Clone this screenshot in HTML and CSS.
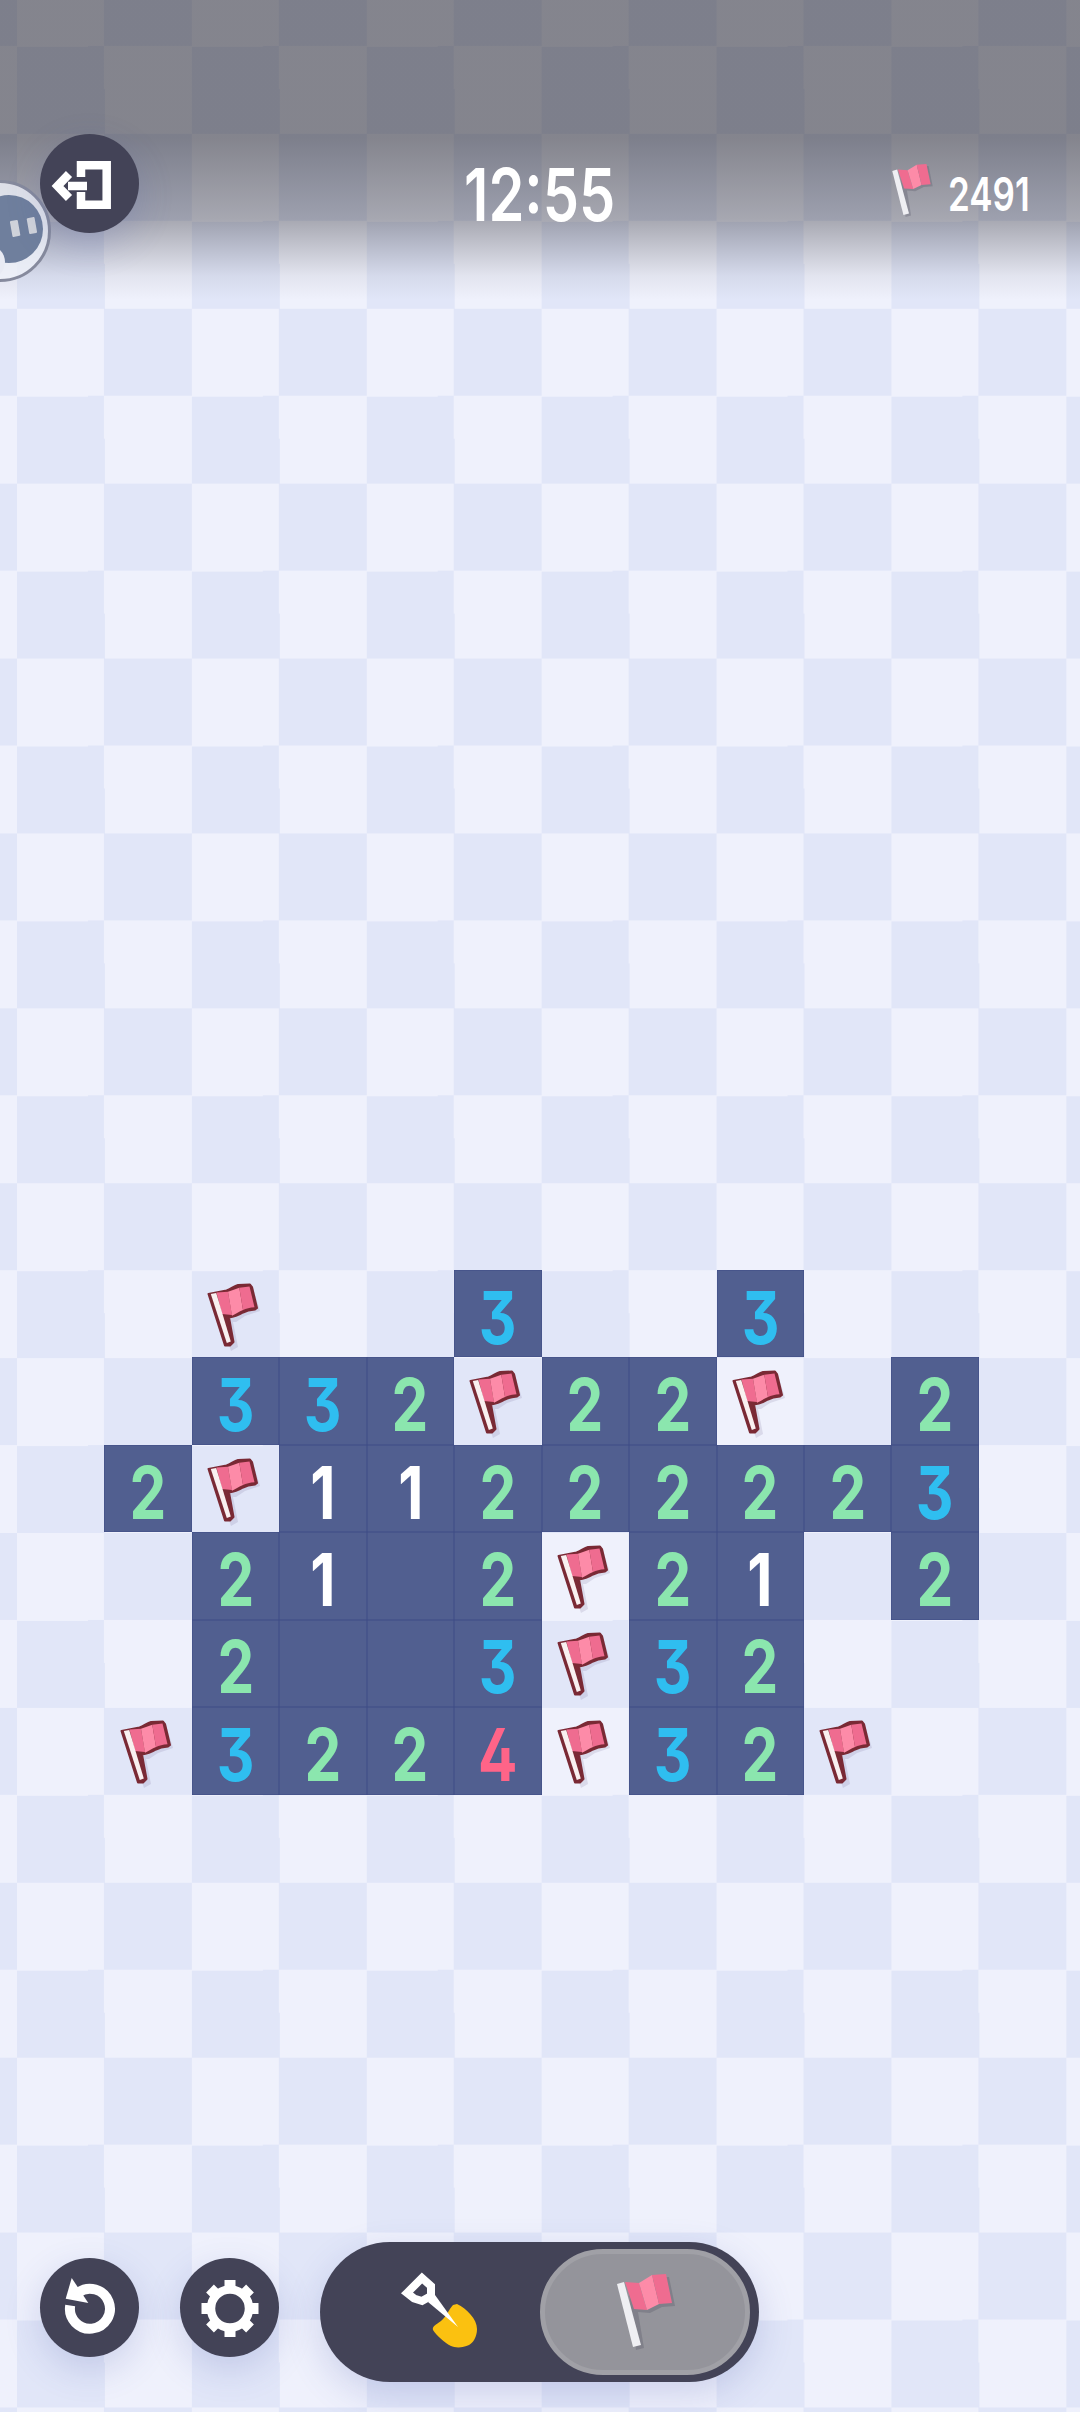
FILE: index.html
```html
<!DOCTYPE html>
<html lang="en">
<head>
  <meta charset="UTF-8">
  <title>Minesweeper</title>
  <link rel="stylesheet" href="styles.css">
</head>
<body>
  <svg class="defs" width="0" height="0">
    <defs>
      <symbol id="flag" viewBox="0 0 56 70">
        <path class="flag-shadow" d="M6 14 L22 10 L33 5 L46 5 L53 28 L38 33 L29 39 L26 39 L31 64 L24 68 Z"/>
        <path class="flag-line" d="M1.500 11 L19.500 7.500 C24 6 27 3 31 2 L43 1.500 L45 4 L50 25 L48 26.500 C43 27 39 28 36 29.500 C32 32 28 34 22 34.500 L26.500 59 L23 62.500 L18 62.500 Z"/>
        <path class="flag-pink" d="M9.500 9.500 L21 8.700 L25 32 L15 31 Z"/>
        <path class="flag-light" d="M21 8.700 C25 7.500 28.500 6 32.300 4.700 L36 27 C32 28.500 29 31 25 32.700 Z"/>
        <path class="flag-pink" d="M32.300 4.700 L42.500 3.500 L47.500 24.300 C43 24.500 39 25.700 36 27 Z"/>
        <path class="flag-pole" d="M3.800 11 L9.200 10 L23.800 58.500 L19.800 60 Z"/>
      </symbol>
      <symbol id="flag-plain" viewBox="0 0 58 76">
        <path class="flag-plain-shadow" d="M11 11 L25 12 L38 4 L52 3 L58 32 L45 33 L33 39 L21 38 L27 74 L19 76 Z"/>
        <path class="flag-pink" d="M8 8 L22 9 L30 36 L17 35 Z"/>
        <path class="flag-light" d="M22 9 L35 1 L42 30 L30 36 Z"/>
        <path class="flag-pink" d="M35 1 L49 0 L55 29 L42 30 Z"/>
        <path class="flag-pole-plain" d="M0 10 L7 8 L24 71 L16 73 Z"/>
      </symbol>
    </defs>
  </svg>

  <main class="board">
    <div class="cell"></div><div class="cell"></div><div class="cell"><svg class="flag"><use href="#flag"/></svg></div><div class="cell"></div><div class="cell"></div><div class="cell open blue"><span class="num">3</span></div><div class="cell"></div><div class="cell"></div><div class="cell open blue"><span class="num">3</span></div><div class="cell"></div><div class="cell"></div><div class="cell"></div>

    <div class="cell"></div><div class="cell"></div><div class="cell open blue"><span class="num">3</span></div><div class="cell open blue"><span class="num">3</span></div><div class="cell open green"><span class="num">2</span></div><div class="cell"><svg class="flag"><use href="#flag"/></svg></div><div class="cell open green"><span class="num">2</span></div><div class="cell open green"><span class="num">2</span></div><div class="cell"><svg class="flag"><use href="#flag"/></svg></div><div class="cell"></div><div class="cell open green"><span class="num">2</span></div><div class="cell"></div>

    <div class="cell"></div><div class="cell open green"><span class="num">2</span></div><div class="cell"><svg class="flag"><use href="#flag"/></svg></div><div class="cell open white"><span class="num">1</span></div><div class="cell open white"><span class="num">1</span></div><div class="cell open green"><span class="num">2</span></div><div class="cell open green"><span class="num">2</span></div><div class="cell open green"><span class="num">2</span></div><div class="cell open green"><span class="num">2</span></div><div class="cell open green"><span class="num">2</span></div><div class="cell open blue"><span class="num">3</span></div><div class="cell"></div>

    <div class="cell"></div><div class="cell"></div><div class="cell open green"><span class="num">2</span></div><div class="cell open white"><span class="num">1</span></div><div class="cell open"></div><div class="cell open green"><span class="num">2</span></div><div class="cell"><svg class="flag"><use href="#flag"/></svg></div><div class="cell open green"><span class="num">2</span></div><div class="cell open white"><span class="num">1</span></div><div class="cell"></div><div class="cell open green"><span class="num">2</span></div><div class="cell"></div>

    <div class="cell"></div><div class="cell"></div><div class="cell open green"><span class="num">2</span></div><div class="cell open"></div><div class="cell open"></div><div class="cell open blue"><span class="num">3</span></div><div class="cell"><svg class="flag"><use href="#flag"/></svg></div><div class="cell open blue"><span class="num">3</span></div><div class="cell open green"><span class="num">2</span></div><div class="cell"></div><div class="cell"></div><div class="cell"></div>

    <div class="cell"></div><div class="cell"><svg class="flag"><use href="#flag"/></svg></div><div class="cell open blue"><span class="num">3</span></div><div class="cell open green"><span class="num">2</span></div><div class="cell open green"><span class="num">2</span></div><div class="cell open pink"><span class="num">4</span></div><div class="cell"><svg class="flag"><use href="#flag"/></svg></div><div class="cell open blue"><span class="num">3</span></div><div class="cell open green"><span class="num">2</span></div><div class="cell"><svg class="flag"><use href="#flag"/></svg></div><div class="cell"></div><div class="cell"></div>
  </main>

  <div class="scrim"></div>

  <div class="bubble">
    <div class="bubble-inner">
      <div class="pause"><i></i><i></i></div>
    </div>
  </div>

  <header class="topbar">
    <button class="round-btn">
      <svg width="99" height="99" viewBox="0 0 99 99"><path class="ico" d="M41 43 V31.200 H66.700 V70.800 H41 V58"/><path class="ico" d="M28 52 H47 M29 40 L17.500 52 L29 64"/></svg>
    </button>
    <div class="timer">12:55</div>
    <div class="flags-left">
      <svg class="flag-small"><use href="#flag-plain"/></svg>
      <span class="count">2491</span>
    </div>
  </header>

  <footer class="toolbar">
    <button class="round-btn">
      <svg width="99" height="99" viewBox="0 0 99 99"><path class="ico ico-ring" d="M38 34.700 A20 20 0 1 1 30.200 47.500"/><path class="ico-fill" d="M31.700 20 L25.700 40.700 L48.300 45 Z"/></svg>
    </button>
    <button class="round-btn">
      <svg width="99" height="99" viewBox="0 0 99 99"><circle class="ico" cx="50" cy="50.500" r="19"/><path class="ico-teeth" d="M50 22 V32 M50 69 V79 M21.500 50.500 H31.500 M68.500 50.500 H78.500 M30 30.500 L37 37.500 M63 63.500 L70 70.500 M70 30.500 L63 37.500 M37 63.500 L30 70.500"/></svg>
    </button>
    <div class="mode">
      <div class="mode-dig">
        <svg width="90" height="90" viewBox="0 0 90 90"><path class="shovel-head" d="M62 39 C72 44 82 54 82 64 C82 72 78 78 74 80 C68 83 60 83 56 81 C50 78 41 70 38 65 C37 61 41 60 46 56 C52 51 54 44 58 40 Z"/><path class="ico-thin" d="M12 28 L27 13 L36 21 L36 31 L27 36 L19 33.500 Z"/><path class="ico-fill" d="M33 37 L40 30 L63 62 Z"/></svg>
      </div>
      <div class="mode-flag">
        <svg class="flag-big"><use href="#flag-plain"/></svg>
      </div>
    </div>
  </footer>
</body>
</html>
```

FILE: styles.css
```css
html, body {
  margin: 0;
  padding: 0;
}
body {
  position: relative;
  width: 1080px;
  height: 2412px;
  overflow: hidden;
  font-family: Inter, "Liberation Sans", sans-serif;
  background-color: #eff1fc;
  background-image: conic-gradient(#e1e6f8 25%, #eff1fc 25%, #eff1fc 50%, #e1e6f8 50%, #e1e6f8 75%, #eff1fc 75%);
  background-size: 174.9px 174.9px;
  background-position: 17px -41px;
}
.defs {
  position: absolute;
}

/* board */
.board {
  display: grid;
  grid-template-columns: repeat(12, 87.45px);
  grid-auto-rows: 87.45px;
  padding: 1270px 0 0 17px;
}
.cell {
  display: flex;
  align-items: center;
  justify-content: center;
  min-width: 0;
  box-sizing: border-box;
  font-size: 73px;
  font-weight: 700;
  font-feature-settings: "cv09", "cv02";
  line-height: 1;
}
.open {
  background: #515f90;
  box-shadow: inset 0 0 0 0.5px #3e4c85;
  padding-top: 7px;
}
.num {
  display: inline-block;
  transform: scaleX(0.8);
}
.blue { color: #2fbef0; }
.green { color: #8be6ae; }
.white { color: #fff; }
.pink { color: #ff6488; }

/* flags */
.flag {
  width: 56px;
  height: 70px;
  margin: 8px 0 0 -1px;
}
.flag-line {
  fill: #7a2a35;
  stroke: #7a2a35;
  stroke-width: 2;
  stroke-linejoin: round;
}
.flag-pink { fill: #ef6c90; }
.flag-light { fill: #fd8ba8; }
.flag-pole { fill: #f9f0f0; }
.flag-pole-plain { fill: #efeff3; }
.flag-shadow { fill: rgba(90, 80, 130, 0.14); }
.flag-plain-shadow { fill: rgba(50, 50, 70, 0.2); }

/* top area */
.scrim {
  position: absolute;
  top: 0;
  left: 0;
  right: 0;
  height: 300px;
  background: linear-gradient(rgba(26, 25, 32, 0.5) 0, rgba(26, 25, 32, 0.5) 46%, rgba(26, 25, 32, 0.34) 73%, rgba(26, 25, 32, 0.06) 92%, rgba(26, 25, 32, 0) 100%);
}
.topbar {
  position: absolute;
  top: 134px;
  left: 40px;
  right: 40px;
  display: grid;
  grid-template-columns: 1fr 148px 1fr;
  align-items: start;
}
.round-btn {
  width: 99px;
  height: 99px;
  padding: 0;
  border: none;
  border-radius: 50%;
  background: #434357;
  box-shadow: 0 12px 36px rgba(70, 85, 170, 0.2);
  display: flex;
  align-items: center;
  justify-content: center;
  flex: none;
}
.timer {
  width: 148px;
  color: #fff;
  font-size: 73px;
  font-weight: 600;
  line-height: 1;
  white-space: nowrap;
  margin: 24px 0 0 -2px;
  transform: scaleX(0.79);
  transform-origin: left;
}
.flags-left {
  justify-self: end;
  display: flex;
  align-items: flex-start;
  gap: 15px;
  padding: 30px 11px 0 0;
}
.flag-small {
  width: 41px;
  height: 53px;
}
.count {
  width: 81px;
  color: #fff;
  font-size: 46px;
  font-weight: 600;
  line-height: 1;
  white-space: nowrap;
  padding-top: 7px;
  transform: scaleX(0.76);
  transform-origin: left;
}

/* floating pause bubble */
.bubble {
  position: absolute;
  left: -51px;
  top: 180px;
  width: 102px;
  height: 102px;
  box-sizing: border-box;
  border: 3.5px solid #868a9d;
  border-radius: 50%;
  background: rgba(240, 242, 250, 0.8);
  display: flex;
  align-items: center;
  justify-content: center;
  overflow: hidden;
}
.bubble-inner {
  flex: none;
  width: 68px;
  height: 68px;
  border-radius: 50%;
  background: #6f7f9d;
  margin: 0 0 4px 18px;
  display: flex;
  align-items: center;
  justify-content: center;
  padding: 0 0 5px 28px;
  box-sizing: border-box;
}
.bubble::after {
  content: "";
  position: absolute;
  left: 19px;
  top: 62px;
  width: 34px;
  height: 34px;
  border-radius: 50%;
  background: #e9ebf4;
}
.pause {
  display: flex;
  gap: 9px;
  transform: rotate(-10deg);
}
.pause i {
  width: 8px;
  height: 16px;
  background: #d0d3da;
  border-radius: 1px;
}

/* bottom buttons */
.ico {
  fill: none;
  stroke: #fff;
  stroke-width: 8.5;
}
.ico-ring {
  stroke-width: 10;
}
.ico-fill { fill: #fff; }
.ico-teeth {
  fill: none;
  stroke: #fff;
  stroke-width: 11;
}
.ico-thin {
  fill: none;
  stroke: #fff;
  stroke-width: 8;
  stroke-linejoin: miter;
}
.shovel-head { fill: #fbc110; }
.toolbar {
  position: absolute;
  left: 40px;
  top: 2242px;
  display: flex;
  align-items: flex-start;
  gap: 41px;
}
.toolbar .round-btn {
  margin-top: 16px;
}
.mode {
  width: 439px;
  height: 140px;
  border-radius: 70px;
  background: #434357;
  box-shadow: 0 12px 36px rgba(70, 85, 170, 0.2);
  display: flex;
  align-items: center;
  box-sizing: border-box;
  padding: 0 9px 0 0;
}
.mode-dig {
  flex: 1;
  display: flex;
  justify-content: center;
  padding: 0 0 4px 20px;
}
.mode-flag {
  width: 210px;
  height: 126px;
  box-sizing: border-box;
  border: 5.5px solid #a0a0a6;
  border-radius: 63px;
  background: #94949b;
  display: flex;
  align-items: center;
  justify-content: center;
}
.flag-big {
  width: 58px;
  height: 76px;
  margin-left: 2px;
}
```
